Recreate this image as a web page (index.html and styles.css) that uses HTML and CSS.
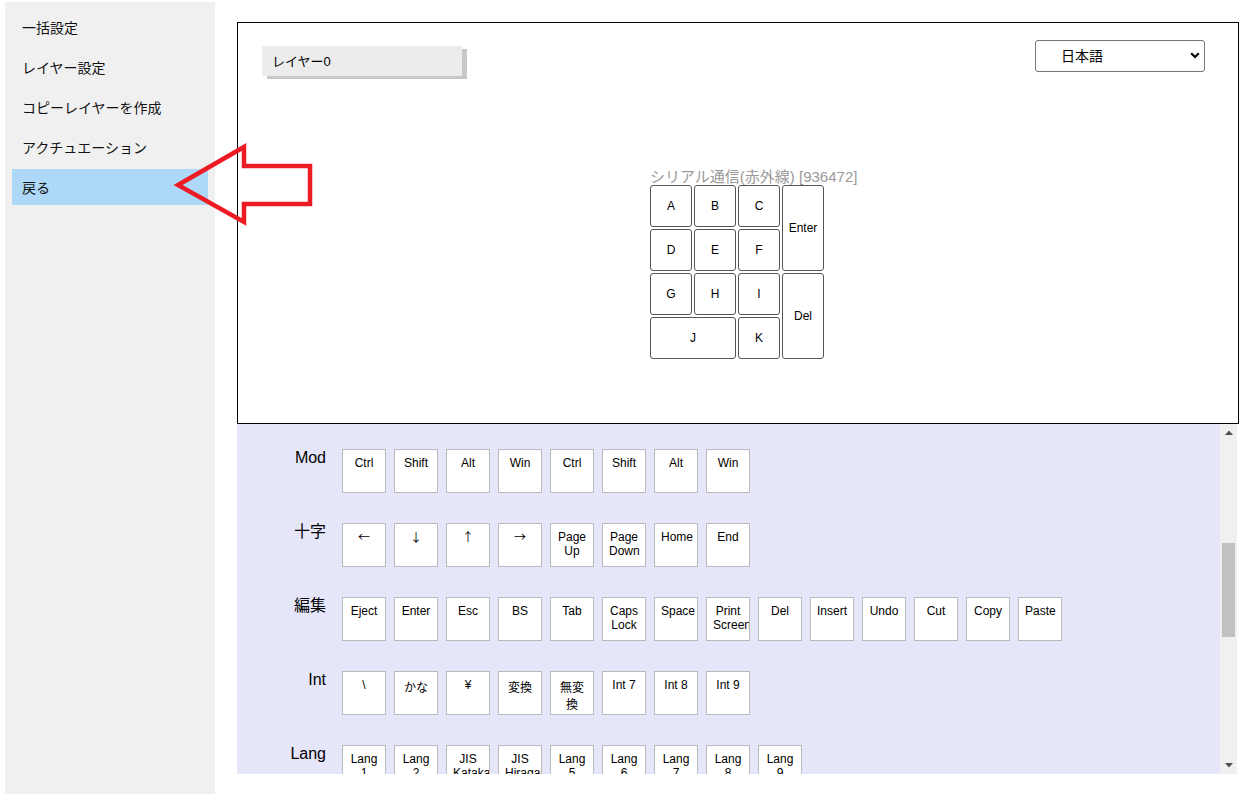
FILE: index.html
```html
<!DOCTYPE html>
<html lang="ja">
<head>
<meta charset="utf-8">
<title>レイヤー設定</title>
<link rel="stylesheet" href="styles.css">
</head>
<body>
<div class="page">
  <nav class="sidebar">
    <div class="nav-item">一括設定</div>
    <div class="nav-item">レイヤー設定</div>
    <div class="nav-item">コピーレイヤーを作成</div>
    <div class="nav-item">アクチュエーション</div>
    <div class="nav-item active">戻る</div>
  </nav>
  <main class="main">
    <section class="editor">
      <div class="editor-head">
        <div class="layer-tab">レイヤー0</div>
        <div class="lang-select">
          <select><option>日本語</option><option>English</option></select>
          <svg class="chev" viewBox="0 0 10 7" width="10" height="7"><path d="M1.2 1.2 L5 5 L8.8 1.2" fill="none" stroke="#000" stroke-width="2.2"/></svg>
        </div>
      </div>
      <div class="kb-wrap">
        <div class="kb">
          <div class="kb-title">シリアル通信(赤外線) [936472]</div>
          <div class="kb-grid">
            <div class="kkey">A</div>
            <div class="kkey">B</div>
            <div class="kkey">C</div>
            <div class="kkey k-enter">Enter</div>
            <div class="kkey">D</div>
            <div class="kkey">E</div>
            <div class="kkey">F</div>
            <div class="kkey">G</div>
            <div class="kkey">H</div>
            <div class="kkey">I</div>
            <div class="kkey k-del">Del</div>
            <div class="kkey k-j">J</div>
            <div class="kkey">K</div>
          </div>
        </div>
      </div>
    </section>
    <section class="palette">
      <div class="palette-body">
        <div class="prow">
          <div class="plabel">Mod</div>
          <div class="pkeys">
            <div class="pkey">Ctrl</div><div class="pkey">Shift</div><div class="pkey">Alt</div><div class="pkey">Win</div>
            <div class="pkey">Ctrl</div><div class="pkey">Shift</div><div class="pkey">Alt</div><div class="pkey">Win</div>
          </div>
        </div>
        <div class="prow">
          <div class="plabel">十字</div>
          <div class="pkeys">
            <div class="pkey arrow">←</div><div class="pkey arrow">↓</div><div class="pkey arrow">↑</div><div class="pkey arrow">→</div>
            <div class="pkey">Page Up</div><div class="pkey">Page Down</div><div class="pkey">Home</div><div class="pkey">End</div>
          </div>
        </div>
        <div class="prow">
          <div class="plabel">編集</div>
          <div class="pkeys">
            <div class="pkey">Eject</div><div class="pkey">Enter</div><div class="pkey">Esc</div><div class="pkey">BS</div>
            <div class="pkey">Tab</div><div class="pkey">Caps Lock</div><div class="pkey">Space</div><div class="pkey">Print Screen</div>
            <div class="pkey">Del</div><div class="pkey">Insert</div><div class="pkey">Undo</div><div class="pkey">Cut</div>
            <div class="pkey">Copy</div><div class="pkey">Paste</div>
          </div>
        </div>
        <div class="prow">
          <div class="plabel">Int</div>
          <div class="pkeys">
            <div class="pkey">\</div><div class="pkey">かな</div><div class="pkey">¥</div><div class="pkey">変換</div>
            <div class="pkey">無変換</div><div class="pkey">Int 7</div><div class="pkey">Int 8</div><div class="pkey">Int 9</div>
          </div>
        </div>
        <div class="prow">
          <div class="plabel">Lang</div>
          <div class="pkeys">
            <div class="pkey">Lang 1</div><div class="pkey">Lang 2</div><div class="pkey">JIS Katakana</div><div class="pkey">JIS Hiragana</div>
            <div class="pkey">Lang 5</div><div class="pkey">Lang 6</div><div class="pkey">Lang 7</div><div class="pkey">Lang 8</div>
            <div class="pkey">Lang 9</div>
          </div>
        </div>
      </div>
      <div class="scrollbar">
        <div class="sb-btn"><svg viewBox="0 0 8 5" width="8" height="5"><path d="M0 5 L4 0.5 L8 5 Z" fill="#505050"/></svg></div>
        <div class="sb-track"><div class="sb-thumb"></div></div>
        <div class="sb-btn"><svg viewBox="0 0 8 5" width="8" height="5"><path d="M0 0 L4 4.5 L8 0 Z" fill="#505050"/></svg></div>
      </div>
    </section>
  </main>
</div>
<svg class="annot-arrow" viewBox="170 140 150 90" width="150" height="90">
  <polygon points="178,185 244,147 244,166 310,166 310,204 244,204 244,222" fill="none" stroke="#ed1c24" stroke-width="4.5" stroke-linejoin="miter"/>
</svg>
</body>
</html>
```
FILE: styles.css
```css
html, body {
  margin: 0;
  padding: 0;
  background: #fff;
}
body {
  position: relative;
  font-family: "Liberation Sans", "Noto Sans CJK JP", sans-serif;
  color: #000;
}
.page {
  display: flex;
  align-items: flex-start;
  padding: 2px 0 0 5px;
}

/* sidebar */
.sidebar {
  width: 210px;
  height: 792px;
  flex: none;
  box-sizing: border-box;
  background: #f0f0f0;
  padding: 7px;
  display: flex;
  flex-direction: column;
  gap: 4px;
}
.nav-item {
  height: 36px;
  display: flex;
  align-items: center;
  padding-left: 10px;
  padding-bottom: 1px;
  box-sizing: border-box;
  font-size: 14px;
  color: #111;
}
.nav-item.active {
  background: #add8f8;
}

/* main */
.main {
  margin-left: 22px;
  margin-top: 20px;
  width: 1002px;
  flex: none;
}
.editor {
  box-sizing: border-box;
  width: 1002px;
  height: 402px;
  border: 1px solid #000;
  padding: 17px 33px 0 24px;
}
.editor-head {
  display: flex;
  justify-content: space-between;
  align-items: flex-start;
}
.layer-tab {
  margin-top: 6px;
  width: 200px;
  height: 30px;
  box-sizing: border-box;
  background: #ececec;
  box-shadow: 5px 3px 0 #c8c8c8;
  padding-left: 10px;
  padding-bottom: 1px;
  display: flex;
  align-items: center;
  font-size: 13px;
}
.lang-select {
  position: relative;
  width: 170px;
  height: 32px;
}
.lang-select select {
  appearance: none;
  -webkit-appearance: none;
  width: 100%;
  height: 100%;
  box-sizing: border-box;
  border: 1px solid #767676;
  border-radius: 3px;
  background: #fff;
  color: #000;
  font-family: inherit;
  font-size: 14px;
  padding: 0 0 0 25px;
  margin: 0;
}
.chev {
  position: absolute;
  right: 5px;
  top: 12px;
  pointer-events: none;
}

/* keyboard */
.kb-wrap {
  display: flex;
  justify-content: center;
  margin-top: 92px;
  padding-left: 7px;
}
.kb {
  width: 174px;
}
.kb-title {
  font-size: 15px;
  line-height: 17px;
  color: #999;
  white-space: nowrap;
}
.kb-grid {
  display: grid;
  grid-template-columns: repeat(4, 42px);
  grid-auto-rows: 42px;
  gap: 2px;
}
.kkey {
  box-sizing: border-box;
  border: 1px solid #555;
  border-radius: 3px;
  background: #fff;
  display: flex;
  align-items: center;
  justify-content: center;
  font-size: 12px;
}
.k-enter {
  grid-column: 4;
  grid-row: 1 / span 2;
}
.k-del {
  grid-column: 4;
  grid-row: 3 / span 2;
}
.k-j {
  grid-column: 1 / span 2;
  grid-row: 4;
}

/* palette */
.palette {
  display: flex;
  width: 1000px;
  height: 350px;
  background: #e6e6fa;
}
.palette-body {
  flex: 1;
  overflow: hidden;
  padding-top: 25px;
  display: flex;
  flex-direction: column;
  gap: 30px;
}
.prow {
  display: flex;
  align-items: flex-start;
  flex: none;
}
.plabel {
  width: 89px;
  flex: none;
  text-align: right;
  font-size: 16px;
  line-height: 18px;
}
.pkeys {
  display: flex;
  gap: 8px;
  margin-left: 16px;
}
.pkey {
  width: 44px;
  height: 44px;
  flex: none;
  box-sizing: border-box;
  border: 1px solid #bbb;
  background: #fff;
  font-size: 12px;
  padding: 6px 6px 0;
  text-align: center;
  overflow: hidden;
}
.pkey.arrow {
  font-family: "Noto Sans CJK JP", sans-serif;
  padding-top: 4px;
}

/* fake scrollbar */
.scrollbar {
  width: 17px;
  flex: none;
  background: #f0f0f0;
  display: flex;
  flex-direction: column;
}
.sb-btn {
  height: 17px;
  display: flex;
  align-items: center;
  justify-content: center;
}
.sb-track {
  flex: 1;
  padding: 0 2px;
}
.sb-thumb {
  margin-top: 102px;
  height: 94px;
  background: #c1c1c1;
}

/* annotation arrow */
.annot-arrow {
  position: absolute;
  left: 170px;
  top: 140px;
}
```
